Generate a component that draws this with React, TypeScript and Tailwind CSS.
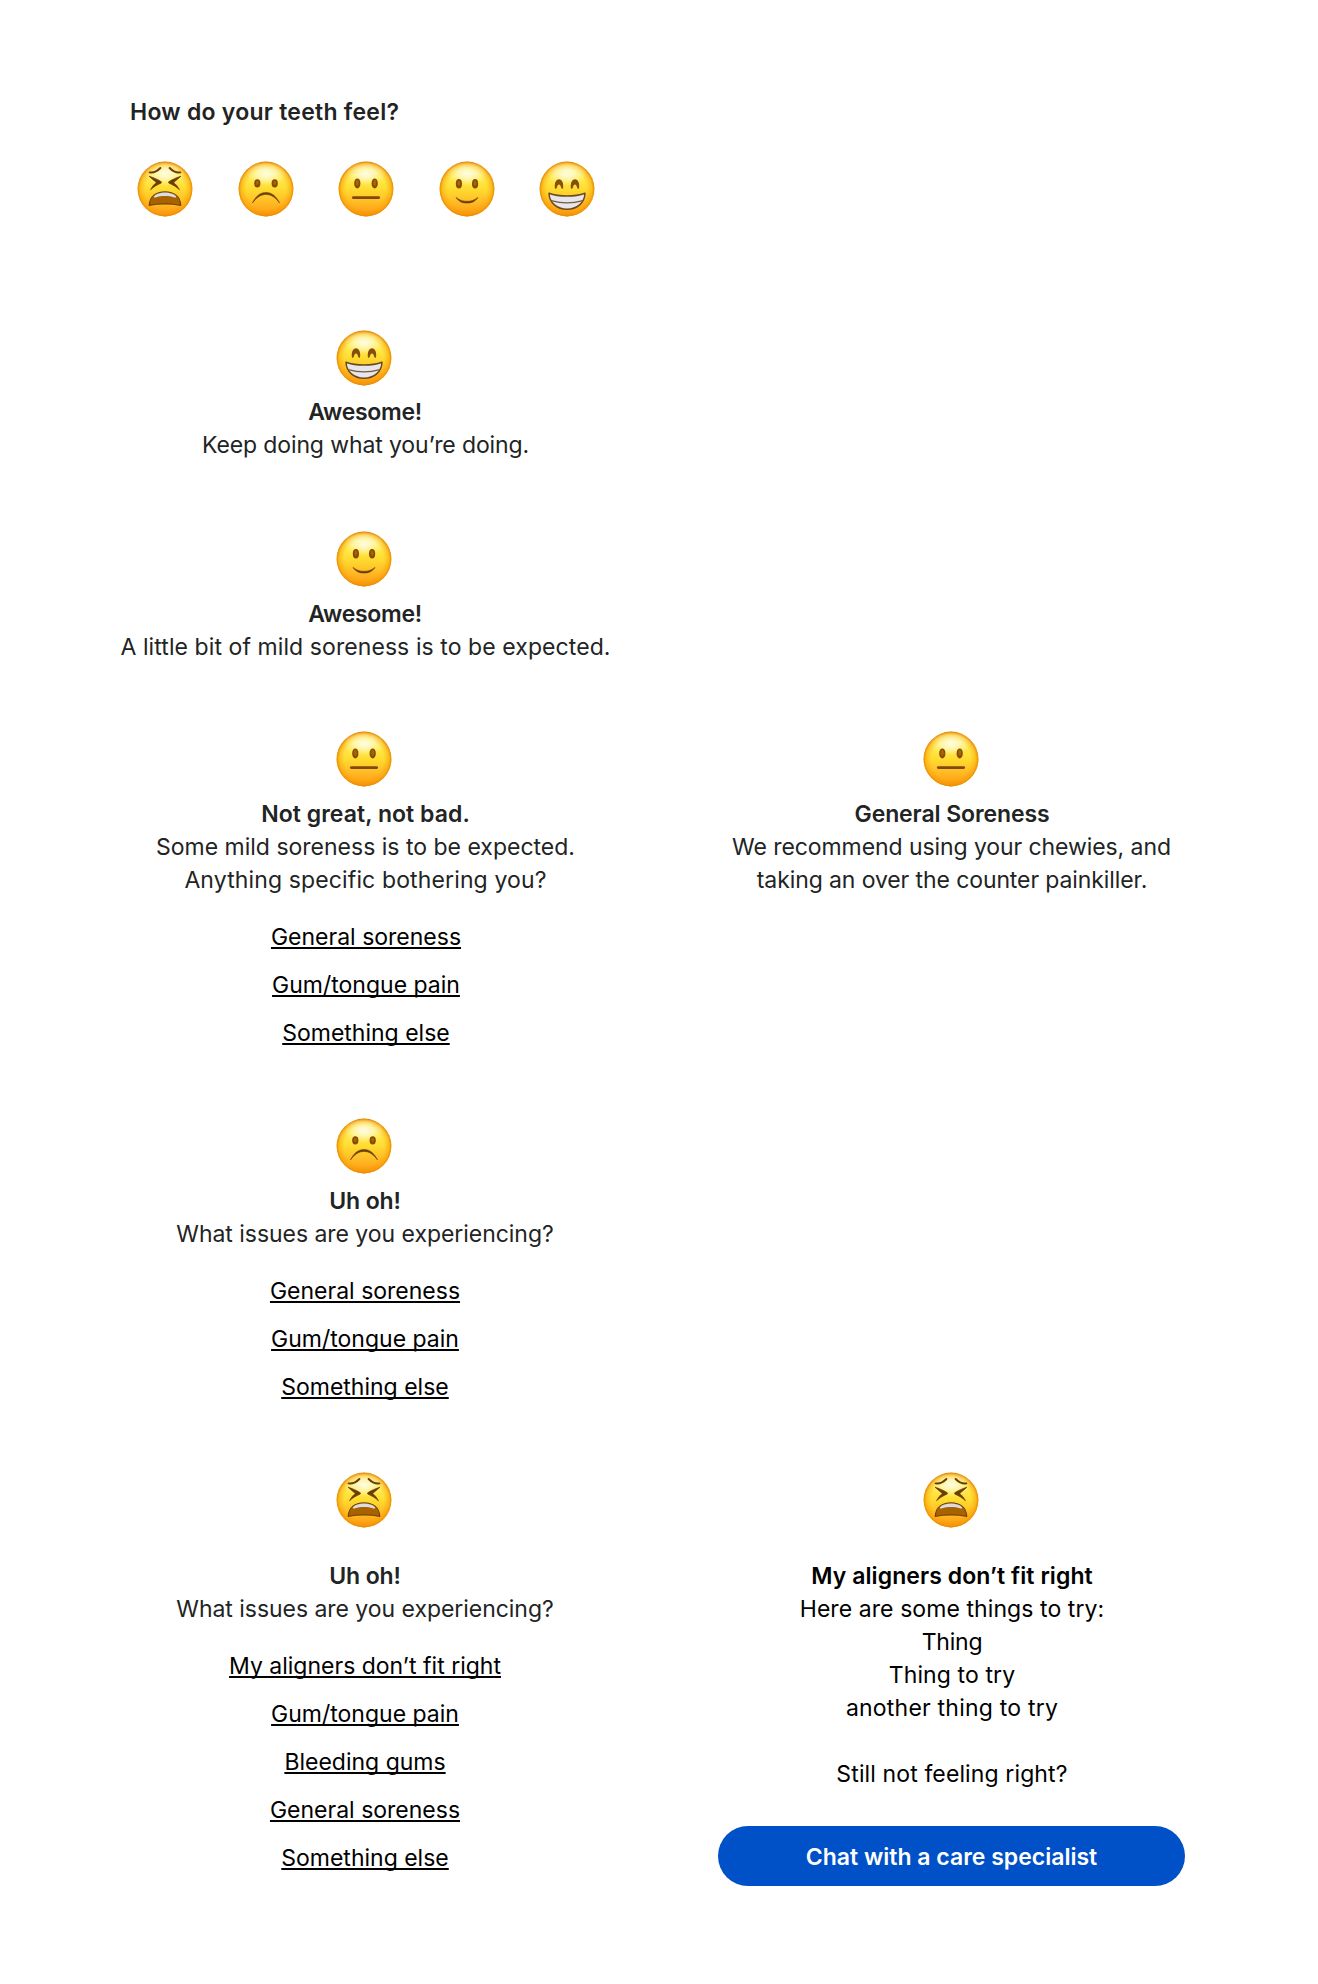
import type { ReactNode } from 'react';

type Mood = 'tired' | 'sad' | 'neutral' | 'smile' | 'grin';

const INK = '#6b3c04';

function Eyes({ x, y, ry }: { x: number; y: number; ry: number }) {
  return (
    <>
      {[-x, x].map((cx) => (
        <g key={cx}>
          <ellipse cx={cx} cy={y} rx="3.1" ry={ry} fill="#874b00" />
          <ellipse cx={cx} cy={y - 0.6} rx="1.5" ry={ry - 2} fill="#a5650a" />
        </g>
      ))}
    </>
  );
}

const features: Record<Mood, ReactNode> = {
  tired: (
    <>
      <path d="M-15.4-16.6C-11.5-16-7.5-18-4.6-21" fill="none" stroke={INK} strokeWidth="1.9" strokeLinecap="round" />
      <path d="M15.4-16.6C11.5-16 7.5-18 4.6-21" fill="none" stroke={INK} strokeWidth="1.9" strokeLinecap="round" />
      <path d="M-16-12.8C-11.5-11.4-7.5-9.7-3.7-7.2L-3.7-6C-8-4.2-11.4-2.2-14.4.7C-12.6-2.8-10.8-4.8-8.6-6.6C-11-8.4-13.6-10.6-16-12.8Z" fill={INK} stroke={INK} strokeWidth=".7" strokeLinejoin="round" />
      <path d="M16-12.8C11.5-11.4 7.5-9.7 3.7-7.2L3.7-6C8-4.2 11.4-2.2 14.4.7C12.6-2.8 10.8-4.8 8.6-6.6C11-8.4 13.6-10.6 16-12.8Z" fill={INK} stroke={INK} strokeWidth=".7" strokeLinejoin="round" />
      <path d="M-15.8 16.4C-15.3 7.4-9 2.9 0 2.9S15.3 7.4 15.8 16.4C11 15.3 5.5 14.9 0 14.9S-11 15.3-15.8 16.4Z" fill="#a86200" stroke="#70450c" strokeWidth="1.1" strokeLinejoin="round" />
      <path d="M-11.2 7.4C-8.5 4.6-4.5 3.5 0 3.5S8.5 4.6 11.2 7.4C11 8.6 10.4 8.8 9.4 8.4C6.5 7.3 3 7 0 7S-6.5 7.3-9.4 8.4C-10.4 8.8-11 8.6-11.2 7.4Z" fill="#dcdce4" />
    </>
  ),
  sad: (
    <>
      <Eyes x={8.7} y={-5.6} ry={4.1} />
      <path d="M-13.6 14C-10.4 7.5-6 3.4 0 3.4S10.4 7.5 13.6 14C9.6 8.8 5.5 5.5 0 5.5S-9.6 8.8-13.6 14Z" fill={INK} stroke={INK} strokeWidth=".5" strokeLinejoin="round" />
    </>
  ),
  neutral: (
    <>
      <Eyes x={8.7} y={-5.6} ry={5} />
      <path d="M-12.7 8.6H12.7" stroke="#80480a" strokeWidth="2.7" strokeLinecap="round" />
    </>
  ),
  smile: (
    <>
      <Eyes x={8.1} y={-5.3} ry={4.7} />
      <path d="M-11 8.4C-7.5 11.2-4 12.3 0 12.3S7.5 11.2 11 8.4C8.3 12.5 4.5 14.1 0 14.1S-8.3 12.5-11 8.4Z" fill={INK} stroke={INK} strokeWidth=".5" strokeLinejoin="round" />
    </>
  ),
  grin: (
    <>
      {[-8, 8].map((cx) => (
        <path key={cx} transform={`translate(${cx} 0)`} d="M-4-.5C-4.9-5.6-3-9.8 0-9.8S4.9-5.6 4-.5C3.2-.1 2.6-.3 2.3-1C1.6-3.3 1-4.4 0-4.4S-1.6-3.3-2.3-1C-2.6-.3-3.2-.1-4-.5Z" fill="#85500a" />
      ))}
      <path d="M-18 4.2C-12 6.4-6 7 0 7S12 6.4 18 4.2C17.6 14 10 20.2 0 20.2S-17.6 14-18 4.2Z" fill="#e6e6ee" stroke="#6b4a1c" strokeWidth="1.5" strokeLinejoin="round" />
      <path d="M-15.7 11.6C-10 13.2-5 13.8 0 13.8S10 13.2 15.7 11.6" fill="none" stroke="#7b5a32" strokeWidth="1.3" />
    </>
  ),
};

function Face({ mood }: { mood: Mood }) {
  return (
    <svg viewBox="-28 -28 56 56" className="h-14 w-14 shrink-0" aria-label={mood}>
      <circle r="27.4" fill="url(#face-base)" />
      <circle r="27.4" fill="url(#face-rim)" />
      <ellipse cy="-15" rx="20" ry="12" fill="url(#face-shine)" />
      {features[mood]}
    </svg>
  );
}

function FaceGradients() {
  return (
    <svg className="absolute h-0 w-0" aria-hidden="true">
      <defs>
        <linearGradient id="face-base" x1="0" y1="0" x2="0" y2="1">
          <stop offset="0" stopColor="#fff48c" />
          <stop offset=".3" stopColor="#ffea50" />
          <stop offset=".5" stopColor="#ffdc30" />
          <stop offset=".72" stopColor="#ffbe26" />
          <stop offset=".88" stopColor="#ffa81a" />
          <stop offset="1" stopColor="#ee8e0a" />
        </linearGradient>
        <radialGradient id="face-rim" cx=".5" cy=".51" r=".51">
          <stop offset=".7" stopColor="#f99a00" stopOpacity="0" />
          <stop offset=".88" stopColor="#f99a00" stopOpacity=".45" />
          <stop offset="1" stopColor="#de7800" stopOpacity=".95" />
        </radialGradient>
        <radialGradient id="face-shine">
          <stop offset="0" stopColor="#fffff4" stopOpacity=".9" />
          <stop offset=".5" stopColor="#fffde0" stopOpacity=".55" />
          <stop offset="1" stopColor="#fff9a0" stopOpacity="0" />
        </radialGradient>
      </defs>
    </svg>
  );
}

function Links({ items }: { items: string[] }) {
  return (
    <ul className="mt-6 flex flex-col items-center gap-[15px] text-black">
      {items.map((item) => (
        <li key={item}>
          <a
            href="#"
            className="underline decoration-[1.5px] underline-offset-2 [text-decoration-skip-ink:none]"
          >
            {item}
          </a>
        </li>
      ))}
    </ul>
  );
}

function Card({ mood, className, children }: { mood: Mood; className?: string; children: ReactNode }) {
  return (
    <section className={`flex flex-col items-center text-center whitespace-nowrap ${className ?? ''}`}>
      <div className="pr-0.5">
        <Face mood={mood} />
      </div>
      {children}
    </section>
  );
}

export default function App() {
  return (
    <main className="h-[1984px] w-[1318px] bg-white pt-24 font-[Inter,sans-serif] text-[23px] leading-[33px] font-[370] text-[#222424]">
      <FaceGradients />
      <header className="pl-[130px]">
        <h1 className="font-semibold tracking-[0.25px]">How do your teeth feel?</h1>
        <div className="mt-8 flex gap-[44.5px] pl-[7px]">
          <Face mood="tired" />
          <Face mood="sad" />
          <Face mood="neutral" />
          <Face mood="smile" />
          <Face mood="grin" />
        </div>
      </header>

      <div className="mt-[113px] grid grid-cols-[500px_467px] items-start gap-x-[103px] pl-[115px]">
        <Card mood="grin" className="col-start-1">
          <h2 className="mt-2.5 font-semibold tracking-[-0.3px]">Awesome!</h2>
          <p className="pl-px tracking-[-0.12px]">Keep doing what you’re doing.</p>
        </Card>

        <Card mood="smile" className="col-start-1 mt-[69px]">
          <h2 className="mt-[11px] font-semibold tracking-[-0.3px]">Awesome!</h2>
          <p className="pl-px tracking-[0.08px]">A little bit of mild soreness is to be expected.</p>
        </Card>

        <Card mood="neutral" className="col-start-1 mt-[67px]">
          <div className="mt-[11px] pl-px">
            <h2 className="font-semibold tracking-[0.05px]">Not great, not bad.</h2>
            <p>Some mild soreness is to be expected.</p>
            <p className="tracking-[0.13px]">Anything specific bothering you?</p>
          </div>
          <div className="pl-0.5">
            <Links items={['General soreness', 'Gum/tongue pain', 'Something else']} />
          </div>
        </Card>

        <Card mood="neutral" className="mt-[67px]">
          <h2 className="mt-[11px] pl-px font-semibold tracking-[-0.1px]">General Soreness</h2>
          <p className="tracking-[-0.08px]">We recommend using your chewies, and</p>
          <p className="pl-px tracking-[-0.1px]">taking an over the counter painkiller.</p>
        </Card>

        <Card mood="sad" className="col-start-1 mt-[68px]">
          <h2 className="mt-[11px] font-semibold tracking-[-0.1px]">Uh oh!</h2>
          <p className="tracking-[-0.04px]">What issues are you experiencing?</p>
          <Links items={['General soreness', 'Gum/tongue pain', 'Something else']} />
        </Card>

        <Card mood="tired" className="col-start-1 mt-[68px]">
          <h2 className="mt-8 font-semibold tracking-[-0.1px]">Uh oh!</h2>
          <p className="tracking-[-0.04px]">What issues are you experiencing?</p>
          <Links
            items={[
              'My aligners don’t fit right',
              'Gum/tongue pain',
              'Bleeding gums',
              'General soreness',
              'Something else',
            ]}
          />
        </Card>

        <Card mood="tired" className="mt-[68px] text-black">
          <h2 className="mt-8 pl-px font-semibold tracking-[0.08px]">My aligners don’t fit right</h2>
          <p className="pl-px tracking-[0.08px]">Here are some things to try:</p>
          <p className="pl-px tracking-[-0.2px]">Thing</p>
          <p className="pl-px tracking-[0.1px]">Thing to try</p>
          <p className="pl-px tracking-[0.22px]">another thing to try</p>
          <p className="mt-[33px] pl-px tracking-[0.12px]">Still not feeling right?</p>
          <button className="mt-[35px] h-[60px] w-full rounded-full bg-[#0050c8] pt-0.5 font-semibold text-white">
            Chat with a care specialist
          </button>
        </Card>
      </div>
    </main>
  );
}
